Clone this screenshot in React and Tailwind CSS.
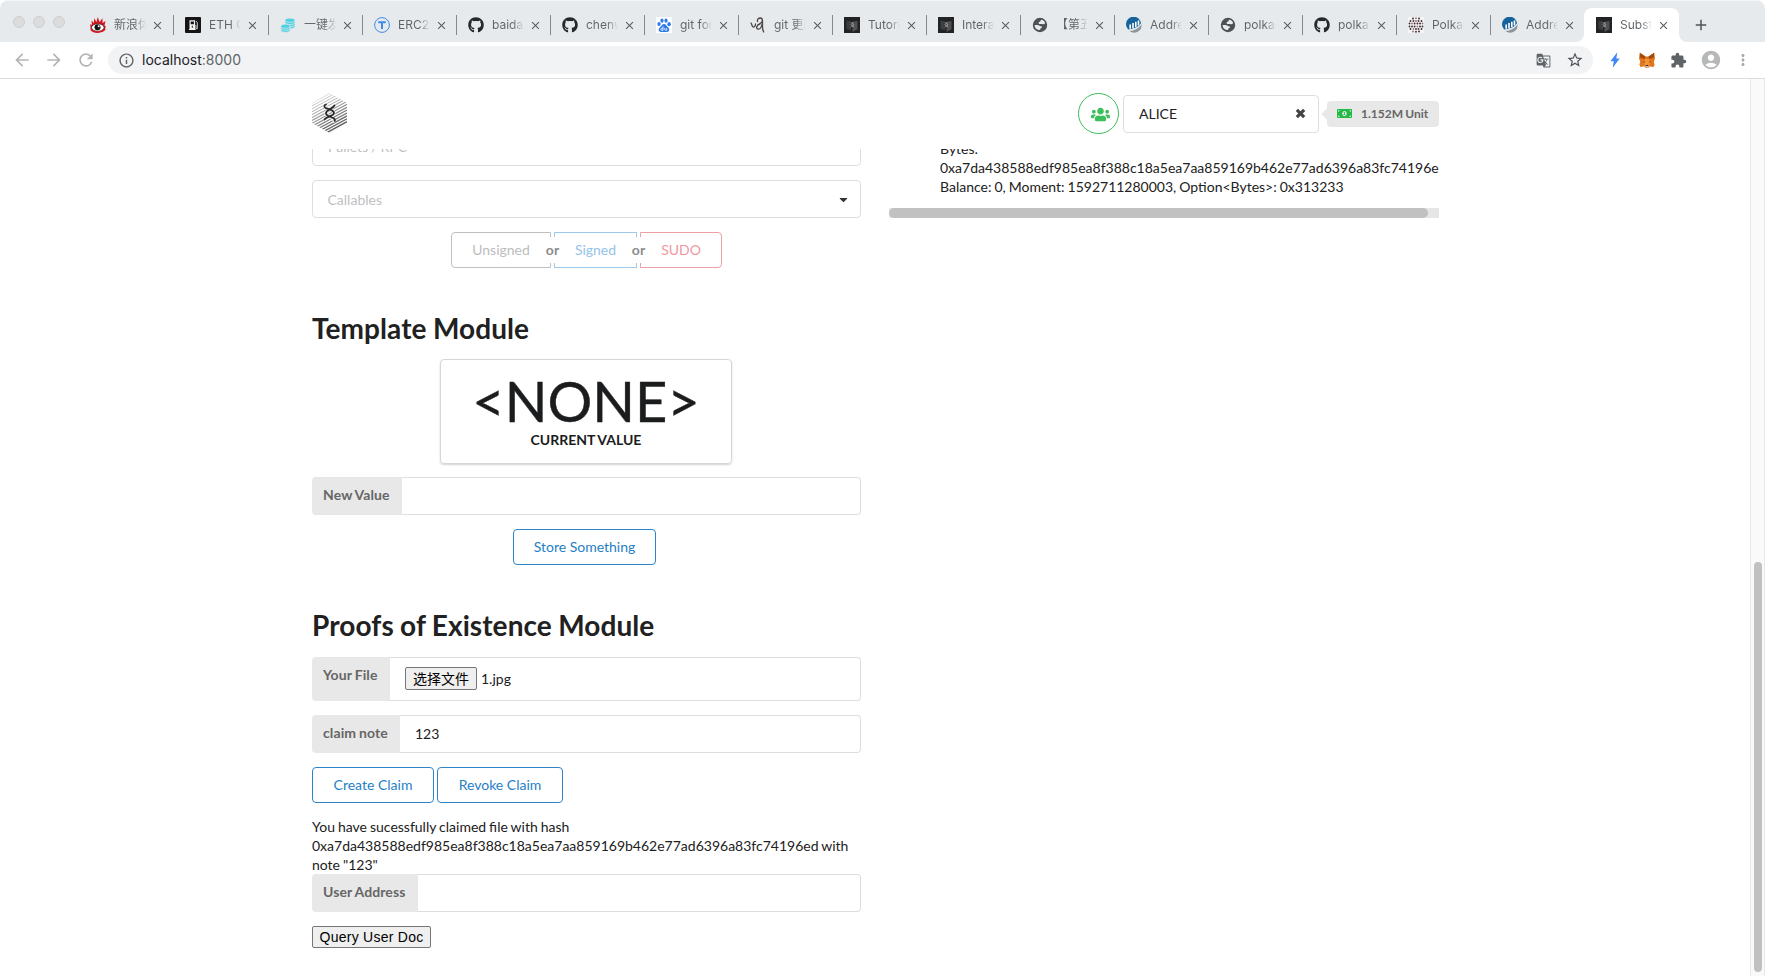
import React from "react";
import { FaGithub, FaUsers, FaMoneyBillAlt, FaCaretDown } from "react-icons/fa";
import { MdGTranslate, MdStarBorder, MdExtension, MdAccountCircle, MdMoreVert, MdArrowBack, MdArrowForward, MdRefresh, MdInfoOutline, MdAdd, MdClose } from "react-icons/md";

const HASH = "0xa7da438588edf985ea8f388c18a5ea7aa859169b462e77ad6396a83fc74196e";

function SubstrateLogo() {
  const rows = Array.from({ length: 18 }, (_, i) => i);
  return (
    <svg className="h-[40px] w-[35px]" viewBox="0 0 35 40">
      <defs>
        <clipPath id="hexagon">
          <path d="M17.500 0 35 10v20L17.500 40 0 30V10z" />
        </clipPath>
      </defs>
      <g clipPath="url(#hexagon)">
        {rows.map((i) => (
          <path key={i} d={`M0 ${10 + i * 2.9}l35-19`} stroke="#222" strokeWidth={0.8 + i * 0.05} opacity={0.25 + i * 0.036} />
        ))}
      </g>
      <g fill="none" strokeLinecap="round">
        <g stroke="#fff" strokeWidth="3.500" opacity=".6">
          <path d="M21.500 12c-1 3.500-7.500 5-7.500 8s6.500 3.500 8 8" />
          <path d="M13 13c1.500 3 9 3.500 9 7s-7.500 4-9 6.500" />
        </g>
        <g stroke="#2b2b2b" strokeWidth="1.800">
          <path d="M22.500 12.500c-2 3.500-8.500 4.500-8.500 7.500s3.500 3.500 6 4.500c2 .7 3.300 1.500 2.800 3.500" />
          <path d="M14 11.500c-2 .5-2.300 2.500-.3 3.500 2.500 1.200 8.300 2 8.300 5s-7.500 3.500-9.500 6.500" />
        </g>
      </g>
    </svg>
  );
}

function SubstrateFav() {
  return (
    <svg className="size-4" viewBox="0 0 16 16">
      <path fill="#222325" d="M0 0h16v16H0z" />
      <path fill="#3d3e40" d="m2.500 3.500 4.500 1v9l-4.500-1.700z" />
      <path fill="#505153" d="m13.500 4-5 1v10l5-2.800z" />
      <path d="M9.600 5c-.5 1.200-2.400 1.500-2.400 2.700s2.400 1.200 2.600 2.600M7 5.400c.4 1.200 2.600 1.300 2.600 2.400S7.400 9.200 7 10.300" fill="none" stroke="#c4c4c4" strokeWidth=".7" />
    </svg>
  );
}

function GlobeFav() {
  return (
    <svg className="size-4" viewBox="0 0 16 16">
      <circle cx="8" cy="8" r="7.200" fill="#4d5055" />
      <path fill="#e7eaed" d="M9.300 2.700c1.700.2 3.300 1.400 3.900 3.300-.8 1.200-1.800 1.400-3 1-.8-.3-1.500.2-2.300.1-.9 0-1.400-.6-1.300-1.400.1-.8 1-.9 1.500-1.200.6-.5.200-1.300 1.200-1.800zM2.500 8.200c2-.1 3.900-.4 5.100.6.9.8 2.500.3 2.400 1.500-.1.900-1.400.7-1.600 1.600-.2.700-.6 1.200-1.400 1.100-2.500-.5-4.300-2.200-4.500-4.800z" />
    </svg>
  );
}

function EtherscanFav() {
  return (
    <svg className="size-4" viewBox="0 0 16 16">
      <path fill="#17639b" d="M2.300 12.500A7.500 7.500 0 1 1 15 6.200c-1.300 2.300-4.300 4.600-8.300 5.600z" />
      <path fill="#8d949b" d="M15.500 7.300A7.500 7.500 0 0 1 3.500 14.100c5-.4 9.700-2.800 12-6.800z" />
      <path stroke="#fff" strokeWidth="1.600" d="M4.200 7.500v4.300M7 6v5.500M9.800 4.700v5.500M12.500 3.500v5" />
    </svg>
  );
}

function WeiboFav() {
  return (
    <svg className="size-4" viewBox="0 0 16 16">
      <path fill="#d8141c" d="M.5 12.500.3 7 2 8 1.500 3.500 4 6l.1-4.800L6.500 5 7.800 0 9.500 5l3-3.700L12.500 6l3-2-1 4.500 1.300 1-1 3.500z" />
      <ellipse cx="7.800" cy="10.500" rx="6.300" ry="3.700" fill="#fff" stroke="#222" strokeWidth=".7" />
      <circle cx="7.500" cy="10.300" r="3" fill="#111" />
      <circle cx="8.700" cy="9.300" r="1" fill="#fff" />
      <path d="M1 12.500c3 3.500 10.500 3.500 14-.5" stroke="#d8141c" strokeWidth="1.800" fill="none" />
    </svg>
  );
}

function GasFav() {
  return (
    <svg className="size-4" viewBox="0 0 16 16">
      <rect width="16" height="16" rx="1" fill="#151517" />
      <path fill="#f4f4f4" d="M4.500 3.300h5.600V12h.5v1H4v-1h.5z" />
      <path fill="#151517" d="M5.700 4.500h3.200v2.700H5.700zM6.800 8.700h1v2h-1z" />
      <path d="m11 4 1.300 1.600v6.100h-1.400V8" fill="none" stroke="#f4f4f4" strokeWidth=".8" />
    </svg>
  );
}

function CoinsFav() {
  return (
    <svg className="size-4" viewBox="0 0 16 16" fill="#4fd0e0" stroke="#e7eaed" strokeWidth=".7">
      <path d="M5 9.500c0 3 10 3 10 0V3c0-2.500-10-2.500-10 0z" />
      <path d="M5 4c1.500 1.800 8.500 1.800 10 0M5 6.200c1.500 1.800 8.500 1.800 10 0M5 8.400c1.500 1.800 8.500 1.800 10 0" fill="none" />
      <path d="M.8 13.200c0 2.800 9.400 2.800 9.400 0V9c0-2.400-9.400-2.400-9.400 0z" />
      <path d="M.8 10c1.500 1.800 7.900 1.800 9.400 0M.8 12c1.500 1.800 7.900 1.800 9.400 0" fill="none" />
    </svg>
  );
}

function TokenFav() {
  return (
    <svg className="size-4" viewBox="0 0 16 16" fill="none" stroke="#3f8be8">
      <circle cx="8" cy="8" r="7.400" />
      <path d="M4.200 5.200h7.600M8 5v7" strokeWidth="2" />
    </svg>
  );
}

function BaiduFav() {
  return (
    <svg className="size-4" viewBox="0 0 16 16">
      <path fill="#fff" d="M0 0h16v16H0z" />
      <g fill="#2f7be8">
        <ellipse cx="3" cy="7" rx="1.700" ry="2.100" />
        <ellipse cx="6" cy="3.600" rx="1.600" ry="2.200" />
        <ellipse cx="10" cy="3.600" rx="1.600" ry="2.200" />
        <ellipse cx="13.100" cy="7.200" rx="1.700" ry="2.100" />
        <path d="M8 7c2 0 2.500 2.200 4 3.300 2.200 1.700 1.500 4.700-1 4.700H5c-2.500 0-3.200-3-1-4.700C5.500 9.200 6 7 8 7z" />
      </g>
      <path d="M7 9.500v3.800H5.700c-1.300 0-1.300-2 0-2H7M8.700 11v1.300c0 1 .5 1 2 1V11" fill="none" stroke="#fff" strokeWidth=".8" />
    </svg>
  );
}

function ScribbleFav() {
  return (
    <svg className="size-4" viewBox="0 0 16 16" fill="none" stroke="#4b4646" strokeWidth="1.300" strokeLinecap="round">
      <path d="M1 6c1 1.500 1 3.500 2.200 4 1.600.4 2.300-1.500 2.300-3M7.500 4.500C7 2.500 8.500 1 10.300 1c2.700 0 2.700 4 0 5.300L8.500 7.500M10 7c-3.500.5-4.500 5-1.700 5.200 2.300 0 3.700-3.200 4.200-7.200M12.500 3.500v6c0 2 .3 4 1.200 5.500" />
    </svg>
  );
}

function PolkaFav() {
  const dots = [
    [5, 1.5], [8, 1.2], [11, 1.5],
    [2.5, 4], [5.5, 4], [8, 4], [10.5, 4], [13.5, 4],
    [1.5, 6.5], [4, 6.5], [6.6, 6.5], [9.4, 6.5], [12, 6.5], [14.5, 6.5],
    [1.5, 9.5], [4, 9.5], [6.6, 9.5], [9.4, 9.5], [12, 9.5], [14.5, 9.5],
    [2.5, 12], [5.5, 12], [8, 12], [10.5, 12], [13.5, 12],
    [5, 14.5], [8, 14.8], [11, 14.5],
  ];
  return (
    <svg className="size-4" viewBox="0 0 16 16">
      <path fill="#f5f5f5" d="M0 0h16v16H0z" />
      {dots.map(([x, y], i) => (
        <circle key={i} cx={x} cy={y} r=".95" fill={i % 4 === 1 ? "#a0737a" : "#3c2e32"} />
      ))}
    </svg>
  );
}

function Fox() {
  return (
    <svg className="size-4" viewBox="0 0 16 16">
      <path fill="#e2761b" d="M.8.800 6.500 4.500h3L15.200.8 16 6l-1.200 4 .8 2.500-1.200 2.700-3.400-1-1.500 1.500h-3L5 14.200l-3.400 1L.4 12.500l.8-2.500L0 6z" />
      <path fill="#a04a12" d="M.8.800 6.500 4.500 5.800 7 1.200 5.800zM15.200.8 9.500 4.500l.7 2.500 4.600-1.200z" />
      <path fill="#f5922f" d="m5.800 7 4.400 0 1 4.500-1.400 2.300H6.200l-1.400-2.300z" />
      <path fill="#d5bfb2" d="M6.200 13.200h3.600l-.4 2H6.600z" />
      <path fill="#233447" d="m3.800 9.500 2 .2-.2 1.100zM12.200 9.500l-2 .2.2 1.100zM6.800 13h2.400v1H6.800z" />
    </svg>
  );
}

const GithubFav = () => <FaGithub className="size-4 text-[#24292e]" />;

const tabs = [
  ["新浪体", WeiboFav], ["ETH G", GasFav], ["一键发", CoinsFav], ["ERC20", TokenFav], ["baidag", GithubFav],
  ["chenw", GithubFav], ["git for", BaiduFav], ["git 更新", ScribbleFav], ["Tutoria", SubstrateFav], ["Interac", SubstrateFav],
  ["【第五", GlobeFav], ["Addres", EtherscanFav], ["polkad", GlobeFav], ["polkad", GithubFav], ["Polkad", PolkaFav],
  ["Addres", EtherscanFav], ["Substr", SubstrateFav],
];

function Tab({ label, Icon, last, wide, active }) {
  return (
    <div className={"relative flex h-[34px] shrink-0 items-center pl-3 " + (wide ? "w-[95px] " : active ? "w-[95px] rounded-t-lg bg-white " : "w-[94px] ")}>
      <Icon />
      <span className="ml-2 w-[32px] overflow-hidden whitespace-nowrap bg-gradient-to-r from-[#5f6368] from-65% to-transparent bg-clip-text text-[12px] leading-4 text-transparent">{label}</span>
      <MdClose className="ml-[4.500px] size-[13px] shrink-0 text-[#5a5e63]" />
      {!last && !active && <span className="absolute -right-px top-[7px] h-5 w-px bg-[#85898d]" />}
      {active && (
        <>
          <svg className="absolute -left-2 bottom-0 size-2" viewBox="0 0 8 8"><path fill="#fff" d="M8 0v8H0a8 8 0 0 0 8-8z" /></svg>
          <svg className="absolute -right-2 bottom-0 size-2" viewBox="0 0 8 8"><path fill="#fff" d="M0 0v8h8a8 8 0 0 1-8-8z" /></svg>
        </>
      )}
    </div>
  );
}

function Browser() {
  return (
    <div className="shrink-0 font-['Inter','Noto_Sans_CJK_SC',sans-serif]">
      <div className="flex h-[42px] items-end rounded-t-lg border-t border-[#f4f5f6] bg-[#e7eaed]">
        <div className="flex w-[78px] shrink-0 gap-2 self-center pl-[13px]">
          {[0, 1, 2].map((i) => (
            <span key={i} className="size-3 rounded-full border border-[#cfcfcf] bg-[#dcdcdc]" />
          ))}
        </div>
        {tabs.map(([label, Icon], i) => (
          <Tab key={i} label={label} Icon={Icon} wide={i === 0 || i === 1} last={i === 15} active={i === 16} />
        ))}
        <MdAdd className="mb-2 ml-[13px] size-[18px] text-[#4f5358]" />
      </div>
      <div className="flex h-[37px] items-center border-b border-[#dcddde] bg-white">
        <MdArrowBack className="ml-[12px] size-5 text-[#b3b5b7]" />
        <MdArrowForward className="ml-[12px] size-5 text-[#b3b5b7]" />
        <MdRefresh className="ml-[12px] size-5 text-[#b3b5b7]" />
        <div className="ml-[12px] flex h-7 w-[1485px] items-center rounded-full bg-[#f1f3f4] pl-[10px] pr-[9px]">
          <MdInfoOutline className="size-[17px] text-[#5f6368]" />
          <span className="ml-[7px] text-[14px] leading-5 text-[#202124]">localhost<span className="text-[#5f6368]">:8000</span></span>
          <MdGTranslate className="ml-auto size-[15px] text-[#5f6368]" />
          <MdStarBorder className="ml-[15px] size-[18px] text-[#4f5358]" />
        </div>
        <svg className="ml-[14px] size-4" viewBox="0 0 16 16"><path fill="#4285f4" d="M10.300.3 3.400 9.200h3.400L5.700 15.700l7-9.200H9.300z" /></svg>
        <span className="ml-4"><Fox /></span>
        <MdExtension className="ml-[15px] size-[17px] text-[#5f6368]" />
        <MdAccountCircle className="ml-[13px] size-[22px] text-[#b5b7b9]" />
        <MdMoreVert className="ml-[12px] size-[18px] text-[#a6a8aa]" />
      </div>
    </div>
  );
}

function Field({ label, width, children, tall, className }) {
  return (
    <div className={"flex w-[549px] " + (tall ? "h-[44px] " : "h-[38px] ") + className}>
      <div className={"shrink-0 whitespace-nowrap rounded-l bg-[#e8e8e8] pl-[11px] pt-[10.500px] text-[14px] font-bold leading-[14px] tracking-[0.1px] text-[#666] " + width}>{label}</div>
      <div className="flex flex-1 items-center rounded-r border border-l-0 border-[#dededf] px-[15px] pb-px">{children}</div>
    </div>
  );
}

function Button({ children, className }) {
  return <button className={"h-9 rounded border border-[#2e84c8] text-center text-[14px] leading-[14px] text-[#2580c6] " + className}>{children}</button>;
}

export default function App() {
  return (
    <div className="flex h-[976px] w-[1765px] flex-col overflow-hidden bg-white">
      <Browser />
      <div className="flex min-h-0 flex-1 font-['Lato','Noto_Sans_CJK_SC',sans-serif] text-[14px] leading-[19px] text-[#212121] [word-spacing:-0.6px]">
        <div className="flex w-[1750px] flex-col pl-[312px] pr-[311px]">
          <header className="flex h-[70px] shrink-0 items-center pb-[1px]">
            <div className="pb-px"><SubstrateLogo /></div>
            <div className="ml-auto flex size-[41px] items-center justify-center rounded-full border border-[#3cbb5a] pl-1 pt-px">
              <FaUsers className="size-[19px] text-[#3cbf5c]" />
            </div>
            <div className="ml-1 flex h-[38px] w-[196px] items-center rounded border border-[#dededf] pl-[15px] pr-[12px]">
              ALICE
              <svg className="ml-auto size-[11px]" viewBox="0 0 12 12"><path d="m2 2 8 8M10 2l-8 8" stroke="#444" strokeWidth="3.400" /></svg>
            </div>
            <div className="relative ml-2 flex h-[26px] w-[112px] items-center whitespace-nowrap rounded bg-[#e8e8e8] pl-[10px] text-[12px] font-bold text-[#666]">
              <span className="absolute -left-1 top-[9px] size-2 rotate-45 bg-[#e8e8e8]" />
              <FaMoneyBillAlt className="mr-[9px] size-[15px] text-[#21ba45]" />
              1.152M Unit
            </div>
          </header>
          <main className="flex min-h-0 flex-1 justify-between overflow-hidden">
            <section className="w-[549px]">
              <div className="-mt-[21px] flex h-[38px] items-center rounded border border-[#dededf] px-[15px] pb-px text-[#bfbfbf]">Pallets / RPC</div>
              <div className="mt-[14px] flex h-[38px] items-center justify-between rounded border border-[#dededf] px-[14.500px] text-[#bfbfbf]">
                Callables
                <FaCaretDown className="-mr-[4px] size-[13px] text-[#333]" />
              </div>
              <div className="mt-[14px] flex justify-center text-center leading-[34px]">
                <div className="h-9 w-[100px] rounded-l border border-[#c0c0c0] text-[#bdbdbd]">Unsigned</div>
                <div className="z-10 -mx-[13px] my-[5px] h-[26px] w-[29px] bg-white font-bold leading-[26px] text-[#8c8c8c]">or</div>
                <div className="h-9 w-[83px] border border-[#a0c8e8] text-[#94c3e8]">Signed</div>
                <div className="z-10 -mx-[13px] my-[5px] h-[26px] w-[29px] bg-white font-bold leading-[26px] text-[#8c8c8c]">or</div>
                <div className="h-9 w-[82px] rounded-r border border-[#eaa0a5] text-[#ee989d]">SUDO</div>
              </div>
              <h1 className="mt-[42px] text-[28px] font-bold leading-9 tracking-[0.08px]">Template Module</h1>
              <div className="ml-[128px] mt-[13px] h-[105px] w-[292px] rounded border border-[#d6d6d7] pt-[12px] text-center shadow-[0_1px_2px_#d4d4d5]">
                <div className="text-[56px] leading-[58px] text-[#1b1c1d] [-webkit-text-stroke:0.4px_#1b1c1d]">&lt;NONE&gt;</div>
                <div className="text-[14px] font-bold leading-[19px] text-[#1b1c1d]">CURRENT VALUE</div>
              </div>
              <Field label="New Value" width="w-[90px]" className="mt-[13px]" />
              <div className="mt-[14px] flex pl-[201px]"><Button className="w-[143px]">Store Something</Button></div>
              <h1 className="mt-[42px] text-[28px] font-bold leading-9 tracking-[0.08px]">Proofs of Existence Module</h1>
              <Field label="Your File" width="w-[78px]" tall className="mt-[14px]">
                <button className="h-[23px] w-[72px] rounded-[2px] border border-[#767676] bg-[#efefef] text-[14px] leading-5 text-black">选择文件</button>
                <span className="ml-[4px]">1.jpg</span>
              </Field>
              <Field label="claim note" width="w-[88px]" className="mt-[14px]">123</Field>
              <div className="mt-[14px] flex gap-[3px]">
                <Button className="w-[122px]">Create Claim</Button>
                <Button className="w-[126px]">Revoke Claim</Button>
              </div>
              <div className="mt-[14px] whitespace-nowrap">
                <div>You have sucessfully claimed file with hash</div>
                <div>{HASH}d with</div>
                <div>note "123"</div>
              </div>
              <Field label="User Address" width="w-[106px]" className="" />
              <button className="mt-[14px] h-[22px] w-[119px] rounded-[2px] border border-[#767676] bg-[#efefef] font-['Liberation_Sans',sans-serif] text-[14px] leading-5 tracking-[0.25px] text-black">Query User Doc</button>
            </section>
            <section className="w-[550px]">
              <div className="-mt-[10px] overflow-hidden whitespace-nowrap pl-[51px]">
                <div>Bytes:</div>
                <div>{HASH}</div>
                <div>Balance: 0, Moment: 1592711280003, Option&lt;Bytes&gt;: 0x313233</div>
              </div>
              <div className="mt-[12px] h-[10px] bg-[#e6e6e6]"><div className="h-full w-[539px] rounded-full bg-[#c1c1c1]" /></div>
            </section>
          </main>
        </div>
        <div className="w-[15px] border-l border-r border-[#e8e8e8] bg-[#fafafa] pl-[3px] pt-[483px]"><div className="h-[410px] w-2 rounded-full bg-[#c1c1c1]" /></div>
      </div>
    </div>
  );
}
